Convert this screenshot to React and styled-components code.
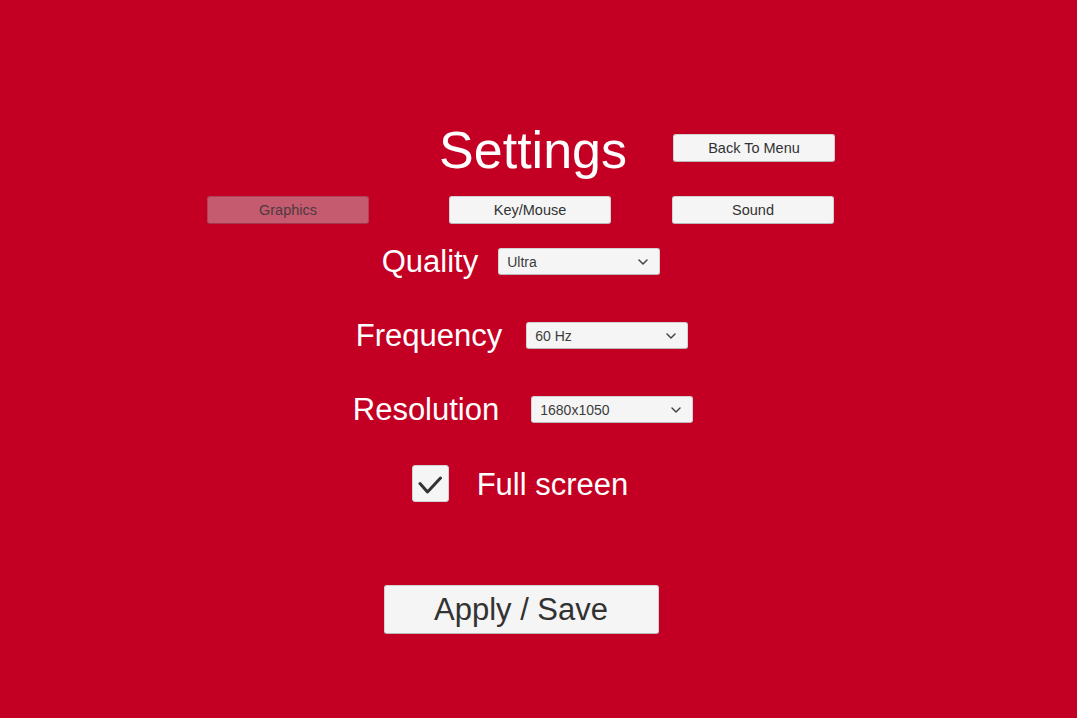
import React from 'react';
import styled, { createGlobalStyle } from 'styled-components';

const GlobalStyle = createGlobalStyle`
  html, body {
    margin: 0;
    padding: 0;
    background: #c30023;
  }
  body {
    font-family: "Liberation Sans", Arial, sans-serif;
  }
`;

const Page = styled.div`
  width: 100%;
  height: 100vh;
  overflow: hidden;
  background: #c30023;
`;

const Panel = styled.div`
  width: 628px;
  margin-left: 207px;
  padding-top: 134px;
  display: flex;
  flex-direction: column;
`;

const Header = styled.div`
  display: flex;
  justify-content: flex-end;
  align-items: center;
  height: 28px;
  gap: 46px;
`;

const Title = styled.h1`
  margin: 4px 0 0;
  font-size: 52px;
  line-height: 1;
  font-weight: 400;
  color: #ffffff;
`;

const Button = styled.button`
  width: ${(p) => p.$width || 162}px;
  height: ${(p) => p.$height || 28}px;
  padding: 0;
  border: 1px solid ${(p) => (p.$active ? '#b0425a' : '#d2d2d2')};
  border-bottom-color: ${(p) => (p.$active ? '#a53550' : '#b9b9b9')};
  border-radius: 3px;
  background: ${(p) => (p.$active ? '#c45b6f' : '#f5f5f5')};
  color: ${(p) => (p.$active ? '#4d3a40' : '#323232')};
  font-family: "Liberation Sans", Arial, sans-serif;
  font-size: ${(p) => p.$size || 14.5}px;
  cursor: pointer;
`;

const Tabs = styled.div`
  display: flex;
  margin-top: 34px;
  height: 28px;
  & > button + button {
    margin-left: 80px;
  }
  & > button:last-child {
    margin-left: 61px;
  }
`;

const Options = styled.div`
  display: flex;
  flex-direction: column;
  gap: 47px;
  margin-top: 24px;
`;

const OptionRow = styled.div`
  display: flex;
  justify-content: center;
  align-items: center;
  height: 27px;
  gap: ${(p) => p.$gap}px;
  margin-left: ${(p) => p.$shift || 0}px;
`;

const Label = styled.span`
  font-size: 31px;
  line-height: 27px;
  color: #ffffff;
  white-space: nowrap;
`;

const Dropdown = styled.div`
  box-sizing: border-box;
  width: 162px;
  height: 27px;
  display: flex;
  align-items: center;
  justify-content: space-between;
  padding: 0 11px 0 8px;
  background: #f5f5f5;
  border: 1px solid #d2d2d2;
  border-bottom-color: #b9b9b9;
  border-radius: 3px;
  font-size: 14px;
  color: #3c3c3c;
`;

const CheckRow = styled.label`
  display: flex;
  justify-content: center;
  align-items: center;
  gap: 28px;
  height: 37px;
  margin-top: 42px;
  margin-right: 2px;
`;

const CheckBox = styled.span`
  box-sizing: border-box;
  width: 37px;
  height: 37px;
  display: flex;
  align-items: center;
  justify-content: center;
  background: #f5f5f5;
  border: 1px solid #d2d2d2;
  border-radius: 3px;
`;

const CheckLabel = styled.span`
  font-size: 31px;
  line-height: 37px;
  padding-top: 2px;
  color: #ffffff;
`;

const Footer = styled.div`
  display: flex;
  justify-content: center;
  margin-top: 83px;
`;

const Chevron = () => (
  <svg width="10" height="6" viewBox="0 0 10 6" fill="none">
    <path d="M1 1l4 4 4-4" stroke="#444" strokeWidth="1.5" strokeLinecap="round" strokeLinejoin="round" />
  </svg>
);

const Check = () => (
  <svg width="26" height="20" viewBox="0 0 26 20" fill="none">
    <path d="M3 9.5l7.5 8.5 13-14" stroke="#333" strokeWidth="3" strokeLinecap="round" strokeLinejoin="round" />
  </svg>
);

const options = [
  { label: 'Quality', value: 'Ultra', gap: 20, shift: 0 },
  { label: 'Frequency', value: '60 Hz', gap: 24, shift: 2 },
  { label: 'Resolution', value: '1680x1050', gap: 32, shift: 4 },
];

export default function App() {
  return (
    <Page>
      <GlobalStyle />
      <Panel>
        <Header>
          <Title>Settings</Title>
          <Button>Back To Menu</Button>
        </Header>
        <Tabs>
          <Button $active>Graphics</Button>
          <Button>Key/Mouse</Button>
          <Button>Sound</Button>
        </Tabs>
        <Options>
          {options.map((o) => (
            <OptionRow key={o.label} $gap={o.gap} $shift={o.shift}>
              <Label>{o.label}</Label>
              <Dropdown>
                <span>{o.value}</span>
                <Chevron />
              </Dropdown>
            </OptionRow>
          ))}
        </Options>
        <CheckRow>
          <CheckBox>
            <Check />
          </CheckBox>
          <CheckLabel>Full screen</CheckLabel>
        </CheckRow>
        <Footer>
          <Button $width={275} $height={49} $size={31}>Apply / Save</Button>
        </Footer>
      </Panel>
    </Page>
  );
}
